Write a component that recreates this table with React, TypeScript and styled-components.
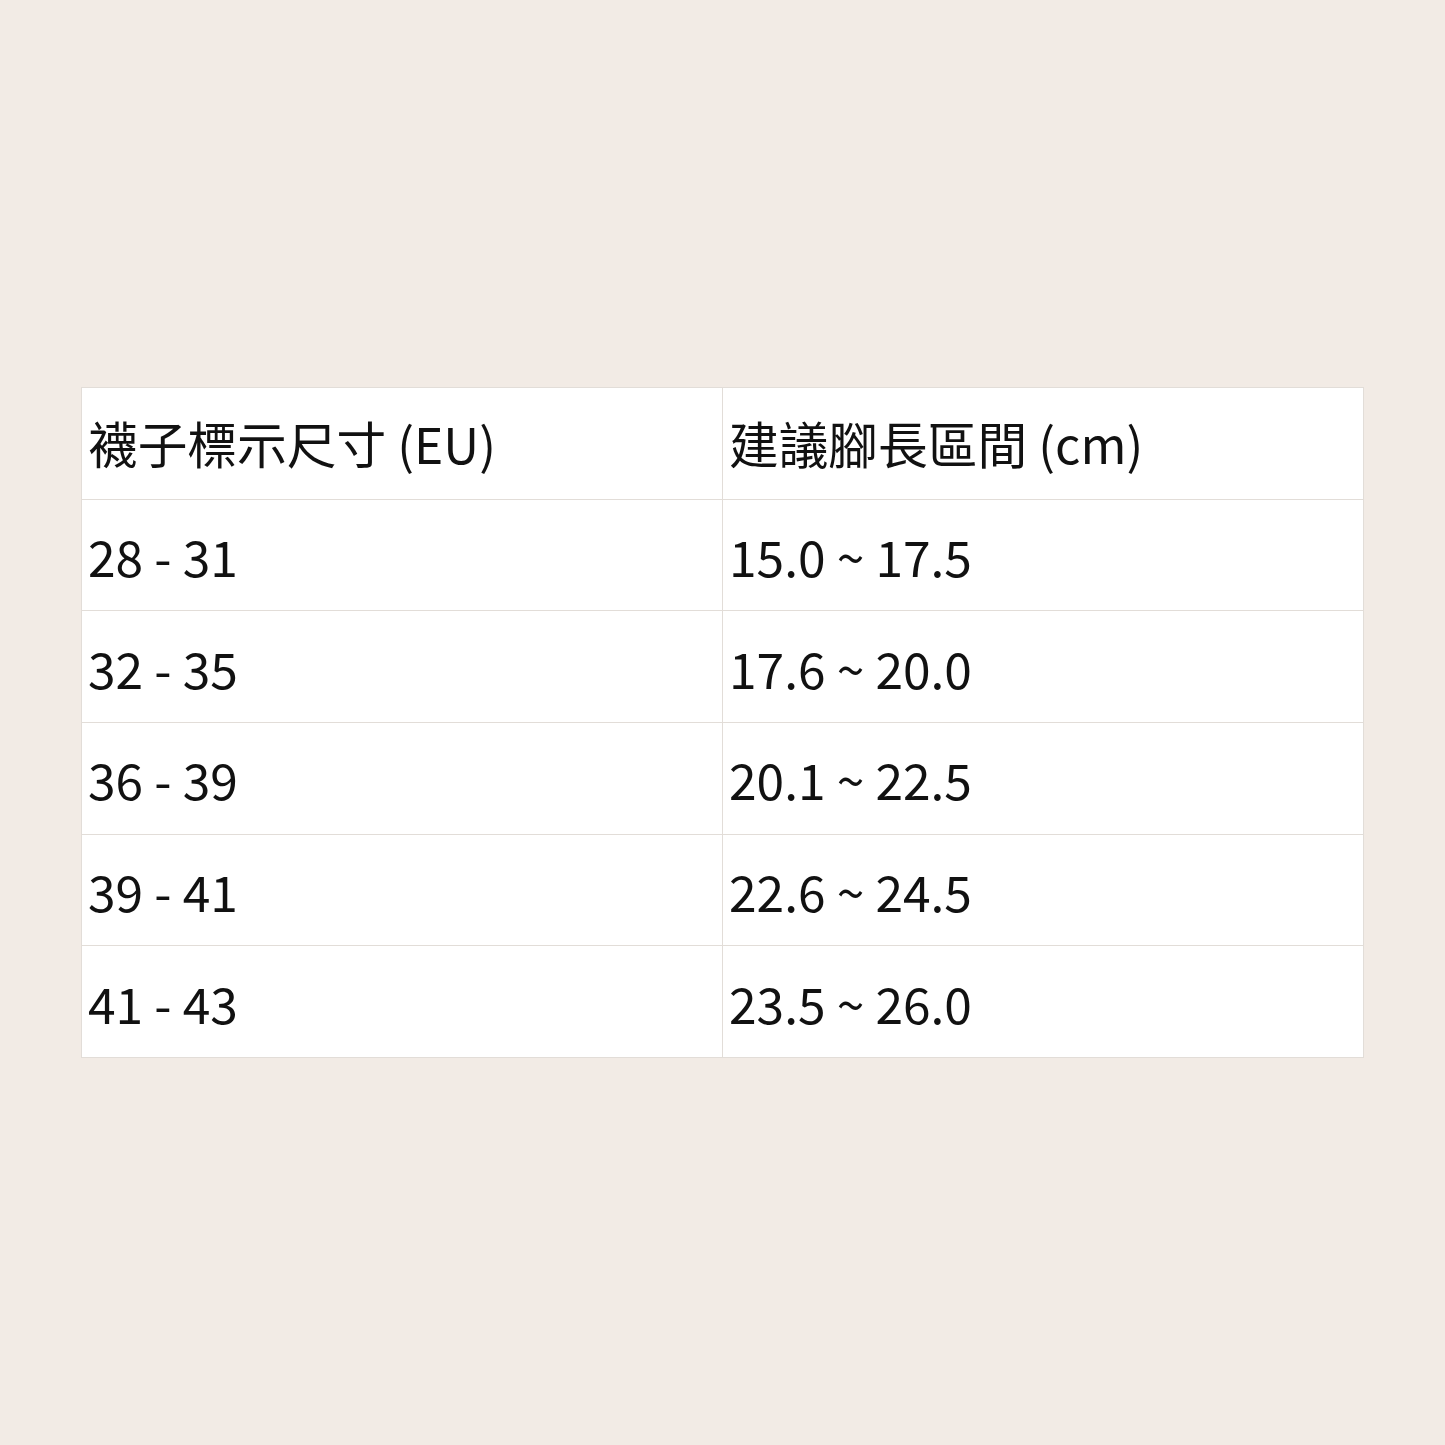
import styled, { createGlobalStyle } from 'styled-components'

const GlobalStyle = createGlobalStyle`
  html, body {
    margin: 0;
    padding: 0;
    background: #f2ebe5;
  }
`

const Page = styled.div`
  width: 1445px;
  height: 1445px;
  box-sizing: border-box;
  padding: 387px 81px 0 81px;
  background: #f2ebe5;
  font-family: 'Noto Sans CJK TC', 'Noto Sans', sans-serif;
  color: #111;
`

const Table = styled.div`
  display: grid;
  grid-template-columns: 641px 641px;
  grid-auto-rows: 111.67px;
  width: 1283px;
  box-sizing: border-box;
  background: #fff;
  border-top: 1px solid #e2ddd8;
  border-left: 1px solid #e2ddd8;
`

type CellProps = { $head?: boolean }

const Cell = styled.div<CellProps>`
  display: flex;
  align-items: center;
  box-sizing: border-box;
  padding: 0 0 0 6px;
  padding-top: ${(p) => (p.$head ? '0' : '2px')};
  border-right: 1px solid #e2ddd8;
  border-bottom: 1px solid #e2ddd8;
  font-size: 49.7px;
  line-height: 1;
  white-space: nowrap;
`

const rows: [string, string][] = [
  ['28 - 31', '15.0 ~ 17.5'],
  ['32 - 35', '17.6 ~ 20.0'],
  ['36 - 39', '20.1 ~ 22.5'],
  ['39 - 41', '22.6 ~ 24.5'],
  ['41 - 43', '23.5 ~ 26.0'],
]

const App = () => {
  return (
    <Page>
      <GlobalStyle />
      <Table>
        <Cell $head>襪子標示尺寸 (EU)</Cell>
        <Cell $head>建議腳長區間 (cm)</Cell>
        {rows.map(([eu, cm]) => [
          <Cell key={eu + 'a'}>{eu}</Cell>,
          <Cell key={eu + 'b'}>{cm}</Cell>,
        ])}
      </Table>
    </Page>
  )
}

export default App
